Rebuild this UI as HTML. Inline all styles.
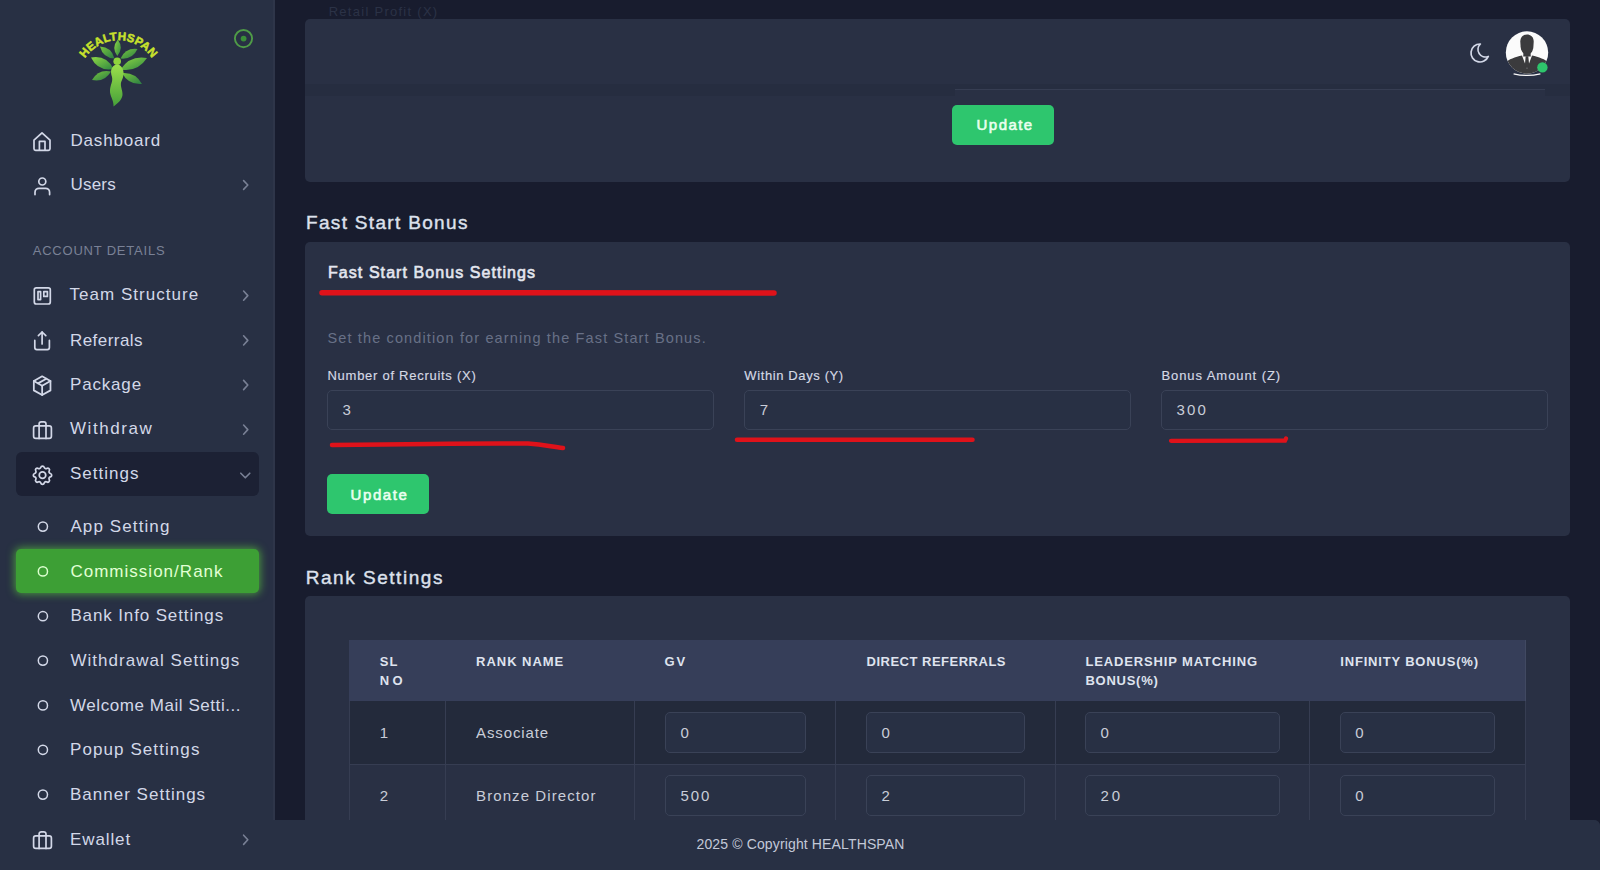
<!DOCTYPE html>
<html><head><meta charset="utf-8">
<style>
*{margin:0;padding:0;box-sizing:border-box}
html,body{width:1600px;height:870px;overflow:hidden;background:#181c2e;font-family:"Liberation Sans",sans-serif}
.a{position:absolute}
.tx{position:absolute;white-space:nowrap}
.card{position:absolute;background:#293044;border-radius:5px}
.inp{position:absolute;border:1px solid #3a4257;border-radius:5px;background:#283044}
.ic{position:absolute;fill:none;stroke:#d3d8e8;stroke-width:1.6;stroke-linecap:round;stroke-linejoin:round}
.chev{position:absolute;fill:none;stroke:#798095;stroke-width:1.3;stroke-linecap:round;stroke-linejoin:round}
.dot{position:absolute;width:11px;height:11px;border:1.5px solid #d3d8e8;border-radius:50%}
</style></head><body>
<!-- sidebar -->
<div class="a" style="left:0;top:0;width:274px;height:870px;background:#283044"></div>
<div class="a" style="left:273px;top:0;width:2px;height:820px;background:#2e3549"></div>
<!-- footer -->
<div class="a" style="left:273px;top:820px;width:1327px;height:50px;background:#283044;border-top-right-radius:6px"></div>

<!-- top card + header -->
<div class="card" style="left:305px;top:19px;width:1265px;height:163px"></div>
<div class="a" style="left:305px;top:84px;width:650px;height:12px;background:#262d40"></div>
<div class="a" style="left:955px;top:84px;width:590px;height:5px;background:#262d40"></div>
<div class="a" style="left:1545px;top:84px;width:25px;height:12px;background:#262d40"></div>
<div class="a" style="left:955px;top:89px;width:590px;height:1px;background:#363d52"></div>
<div class="a" style="left:952px;top:105px;width:102px;height:40px;background:#2ec66e;border-radius:5px"></div>

<div class="card" style="left:305px;top:242px;width:1265px;height:294px"></div>
<div class="inp" style="left:327px;top:390px;width:387px;height:40px"></div>
<div class="inp" style="left:744px;top:390px;width:387px;height:40px"></div>
<div class="inp" style="left:1161px;top:390px;width:387px;height:40px"></div>
<div class="a" style="left:327px;top:474px;width:102px;height:40px;background:#2ec66e;border-radius:5px"></div>

<div class="card" style="left:305px;top:596px;width:1265px;height:274px"></div>
<!-- table -->
<div class="a" style="left:349px;top:640px;width:1177px;height:61px;background:#363e59;border-right:1px solid #414962"></div>
<div class="a" style="left:349px;top:701px;width:1177px;height:63px;background:#232a3b"></div>
<div class="a" style="left:349px;top:764px;width:1177px;height:1px;background:#363d52"></div>
<div class="a" style="left:349px;top:701px;width:1px;height:119px;background:#363d52"></div>
<div class="a" style="left:445px;top:701px;width:1px;height:119px;background:#363d52"></div>
<div class="a" style="left:634px;top:701px;width:1px;height:119px;background:#363d52"></div>
<div class="a" style="left:835px;top:701px;width:1px;height:119px;background:#363d52"></div>
<div class="a" style="left:1055px;top:701px;width:1px;height:119px;background:#363d52"></div>
<div class="a" style="left:1309px;top:701px;width:1px;height:119px;background:#363d52"></div>
<div class="a" style="left:1525px;top:701px;width:1px;height:119px;background:#363d52"></div>
<div class="inp" style="left:665px;top:712px;width:141px;height:41px"></div>
<div class="inp" style="left:866px;top:712px;width:159px;height:41px"></div>
<div class="inp" style="left:1085px;top:712px;width:195px;height:41px"></div>
<div class="inp" style="left:1340px;top:712px;width:155px;height:41px"></div>
<div class="inp" style="left:665px;top:775px;width:141px;height:41px"></div>
<div class="inp" style="left:866px;top:775px;width:159px;height:41px"></div>
<div class="inp" style="left:1085px;top:775px;width:195px;height:41px"></div>
<div class="inp" style="left:1340px;top:775px;width:155px;height:41px"></div>
<!-- footer again on top of table -->
<div class="a" style="left:273px;top:820px;width:1327px;height:50px;background:#283044;border-top-right-radius:6px"></div>

<!-- sidebar active states -->
<div class="a" style="left:16px;top:452px;width:243px;height:44px;background:#1c2134;border-radius:6px"></div>
<div class="a" style="left:16px;top:549px;width:243px;height:44px;background:#3d9f35;border-radius:5px;box-shadow:0 0 8px 1px rgba(95,215,60,.65)"></div>


<!-- logo -->
<svg class="a" style="left:0;top:0" width="275" height="120" viewBox="0 0 275 120">
<defs>
<linearGradient id="lg1" x1="0" y1="0" x2="1" y2="1"><stop offset="0" stop-color="#8fd845"/><stop offset="1" stop-color="#2e8740"/></linearGradient>
<linearGradient id="lg2" x1="0" y1="0" x2="1" y2="1"><stop offset="0" stop-color="#79c63e"/><stop offset="1" stop-color="#2a7d44"/></linearGradient>
<linearGradient id="lg3" x1="0" y1="0" x2="0" y2="1"><stop offset="0" stop-color="#9de04b"/><stop offset="1" stop-color="#45a03a"/></linearGradient>
<path id="arc" d="M86 57 A40 40 0 0 1 151 57"/>
</defs>
<text font-family="Liberation Sans" font-weight="700" font-size="11.5" fill="#c8e12c" stroke="#c8e12c" stroke-width="0.5" letter-spacing="0.2"><textPath href="#arc" startOffset="50%" text-anchor="middle">HEALTHSPAN</textPath></text>
<path d="M117.3 56.0 Q124.0 47.9 117.8 39.5 Q111.1 47.6 117.3 56.0Z" fill="url(#lg1)"/><path d="M114.5 58.5 Q111.7 47.1 100.0 46.5 Q102.8 57.9 114.5 58.5Z" fill="url(#lg2)"/><path d="M120.5 58.5 Q132.4 59.9 137.5 49.0 Q125.6 47.6 120.5 58.5Z" fill="url(#lg2)"/><path d="M113.5 69.0 Q106.6 54.8 91.0 57.5 Q97.9 71.7 113.5 69.0Z" fill="url(#lg1)"/><path d="M120.5 69.5 Q137.5 72.5 147.0 58.0 Q130.0 55.0 120.5 69.5Z" fill="url(#lg1)"/><path d="M111.0 71.5 Q98.4 68.9 92.0 80.0 Q104.6 82.6 111.0 71.5Z" fill="url(#lg2)"/><path d="M122.0 73.0 Q128.4 85.1 142.0 84.0 Q135.6 71.9 122.0 73.0Z" fill="url(#lg2)"/>
<path d="M117 64 C124 66 125 74 122 80 C119 85 123 90 122.5 95 C122 100 117 104 113.5 106.5 C114 100 109.5 96 110 90 C110.5 84 113 82 112 77 C110 71 111 66 117 64Z" fill="url(#lg3)"/>
<circle cx="117.2" cy="61.3" r="3.8" fill="#8fd43c"/>
</svg>
<!-- icons -->
<svg class="a" style="left:0;top:0;overflow:visible" width="275" height="870">
<g fill="none" stroke="#d3d8e8" stroke-width="1.7" stroke-linecap="round" stroke-linejoin="round">
<path d="M34 140.2 L42 132.8 L50 140.2 V148.8 a1.6 1.6 0 0 1 -1.6 1.6 H35.6 a1.6 1.6 0 0 1 -1.6 -1.6 Z"/>
<path d="M39.4 150.2 V141.4 H45 V150.2"/>
<circle cx="42.3" cy="181.5" r="3.5"/>
<path d="M35 194.6 V192.3 a4 4 0 0 1 4 -4 H45.6 a4 4 0 0 1 4 4 V194.6"/>
<rect x="34.3" y="287.8" width="16" height="16.2" rx="2"/>
<rect x="38" y="291.6" width="2.6" height="8"/>
<rect x="43.8" y="291.6" width="3.6" height="4.8"/>
<path d="M34.8 340.4 V347.6 a2 2 0 0 0 2 2 H47.4 a2 2 0 0 0 2 -2 V340.4"/>
<path d="M42.1 344 V332"/><path d="M38.4 335.6 L42.1 332 L45.8 335.6"/>
<g transform="translate(29.67 373.22) scale(1.04)"><path d="M12 3l8 4.5l0 9l-8 4.5l-8 -4.5l0 -9l8 -4.5"/><path d="M12 12l8 -4.5"/><path d="M12 12l0 9"/><path d="M12 12l-8 -4.5"/><path d="M16 5.25l-8 4.5"/></g>
<rect x="33.6" y="425.8" width="17.8" height="12.6" rx="2.2"/>
<path d="M39.1 438.4 V424 a2.2 2.2 0 0 1 2.2 -2.2 H43.8 a2.2 2.2 0 0 1 2.2 2.2 V438.4"/>
<g transform="translate(30.26 462.96) scale(1.02)"><path d="M10.325 4.317c.426 -1.756 2.924 -1.756 3.35 0a1.724 1.724 0 0 0 2.573 1.066c1.543 -.94 3.31 .826 2.37 2.37a1.724 1.724 0 0 0 1.065 2.572c1.756 .426 1.756 2.924 0 3.35a1.724 1.724 0 0 0 -1.066 2.573c.94 1.543 -.826 3.31 -2.37 2.37a1.724 1.724 0 0 0 -2.572 1.065c-.426 1.756 -2.924 1.756 -3.35 0a1.724 1.724 0 0 0 -2.573 -1.066c-1.543 .94 -3.31 -.826 -2.37 -2.37a1.724 1.724 0 0 0 -1.065 -2.572c-1.756 -.426 -1.756 -2.924 0 -3.35a1.724 1.724 0 0 0 1.066 -2.573c-.94 -1.543 .826 -3.31 2.37 -2.37c1 .608 2.296 .07 2.572 -1.065z"/><circle cx="12" cy="12" r="3.2"/></g>
<rect x="33.6" y="835.8" width="17.8" height="12.6" rx="2.2"/>
<path d="M39.1 848.4 V834 a2.2 2.2 0 0 1 2.2 -2.2 H43.8 a2.2 2.2 0 0 1 2.2 2.2 V848.4"/>
</g>
<g fill="none" stroke="#d3d8e8" stroke-width="1.5">
<circle cx="42.9" cy="526.6" r="4.6"/>
<circle cx="42.9" cy="616.2" r="4.6"/>
<circle cx="42.9" cy="660.6" r="4.6"/>
<circle cx="42.9" cy="705.4" r="4.6"/>
<circle cx="42.9" cy="749.8" r="4.6"/>
<circle cx="42.9" cy="794.6" r="4.6"/>
<circle cx="42.9" cy="571.4" r="4.6" stroke="#dcffcf"/>
</g>
<g fill="none" stroke="#798095" stroke-width="1.6" stroke-linecap="round" stroke-linejoin="round">
<path d="M243.6 180.6 L247.8 185 L243.6 189.4"/>
<path d="M243.6 291 L247.8 295.6 L243.6 300.2"/>
<path d="M243.6 335.8 L247.8 340.4 L243.6 345"/>
<path d="M243.6 380.4 L247.8 385 L243.6 389.6"/>
<path d="M243.6 425 L247.8 429.6 L243.6 434.2"/>
<path d="M240.8 473.2 L245.3 477.8 L249.8 473.2"/>
<path d="M243.6 835.2 L247.8 839.8 L243.6 844.4"/>
</g>
<circle cx="243.5" cy="38.6" r="8.6" fill="none" stroke="#4f9b47" stroke-width="1.9"/>
<circle cx="243.6" cy="38.6" r="2.9" fill="#3a8f38"/>
</svg>
<!-- moon + avatar -->
<svg class="a" style="left:1468.2px;top:40.6px" width="24" height="24" viewBox="0 0 24 24"><path d="M12 3c.132 0 .263 0 .393 0a7.5 7.5 0 0 0 7.92 12.446a9 9 0 1 1 -8.313 -12.454z" fill="none" stroke="#d3d8e8" stroke-width="1.7" stroke-linejoin="round"/></svg>
<svg class="a" style="left:1500px;top:26px" width="56" height="56" viewBox="0 0 56 56">
<defs><clipPath id="av"><circle cx="27" cy="26.5" r="21.2"/></clipPath></defs>
<circle cx="27" cy="26.5" r="21.2" fill="#fbfbfb"/>
<g clip-path="url(#av)" fill="#3b3b3d">
<path d="M20.3 15.5 C20.3 6 33.7 6 33.7 15.5 L33.4 21 C33 25.5 30.5 28.5 27 29 C23.5 28.5 21 25.5 20.6 21 Z"/>
<path d="M23.6 25 L30.4 25 L30.8 30.5 L23.2 30.5 Z"/>
<path d="M2 52 L4.5 37.5 C8 33.5 15 31 22 29.5 L27 43 L32 29.5 C39 31 46 33.5 49.5 37.5 L52 52 Z"/>
<path d="M25.7 30.2 L28.3 30.2 L29.2 39.5 L27 43 L24.8 39.5 Z"/>
</g>
<path d="M13.6 47.8 Q27 51 40.4 47.8" stroke="#fbfbfb" stroke-width="1.2" fill="none"/>
<circle cx="42.4" cy="41.4" r="5.2" fill="#2ec56c"/>
</svg>

<div id="t0" class="tx" style="left:70.50px;top:131.81px;font-size:17px;line-height:17px;color:#d3d8e8;font-weight:400;letter-spacing:0.816px;">Dashboard</div>
<div id="t1" class="tx" style="left:70.50px;top:175.61px;font-size:17px;line-height:17px;color:#d3d8e8;font-weight:400;letter-spacing:0.200px;">Users</div>
<div id="t2" class="tx" style="left:32.70px;top:244.20px;font-size:13px;line-height:13px;color:#7a8196;font-weight:400;letter-spacing:0.794px;">ACCOUNT DETAILS</div>
<div id="t3" class="tx" style="left:69.50px;top:286.41px;font-size:17px;line-height:17px;color:#d3d8e8;font-weight:400;letter-spacing:1.033px;">Team Structure</div>
<div id="t4" class="tx" style="left:70.00px;top:331.51px;font-size:17px;line-height:17px;color:#d3d8e8;font-weight:400;letter-spacing:0.441px;">Referrals</div>
<div id="t5" class="tx" style="left:70.00px;top:375.91px;font-size:17px;line-height:17px;color:#d3d8e8;font-weight:400;letter-spacing:0.823px;">Package</div>
<div id="t6" class="tx" style="left:70.00px;top:420.41px;font-size:17px;line-height:17px;color:#d3d8e8;font-weight:400;letter-spacing:1.564px;">Withdraw</div>
<div id="t7" class="tx" style="left:70.00px;top:465.31px;font-size:17px;line-height:17px;color:#d3d8e8;font-weight:400;letter-spacing:0.996px;">Settings</div>
<div id="t8" class="tx" style="left:70.40px;top:517.61px;font-size:17px;line-height:17px;color:#d3d8e8;font-weight:400;letter-spacing:1.109px;">App Setting</div>
<div id="t9" class="tx" style="left:70.40px;top:562.61px;font-size:17px;line-height:17px;color:#e2ffd4;font-weight:400;letter-spacing:1.019px;">Commission/Rank</div>
<div id="t10" class="tx" style="left:70.40px;top:607.21px;font-size:17px;line-height:17px;color:#d3d8e8;font-weight:400;letter-spacing:0.872px;">Bank Info Settings</div>
<div id="t11" class="tx" style="left:70.40px;top:651.61px;font-size:17px;line-height:17px;color:#d3d8e8;font-weight:400;letter-spacing:1.031px;">Withdrawal Settings</div>
<div id="t12" class="tx" style="left:70.00px;top:696.81px;font-size:17px;line-height:17px;color:#d3d8e8;font-weight:400;letter-spacing:0.558px;">Welcome Mail Setti...</div>
<div id="t13" class="tx" style="left:70.00px;top:740.91px;font-size:17px;line-height:17px;color:#d3d8e8;font-weight:400;letter-spacing:1.084px;">Popup Settings</div>
<div id="t14" class="tx" style="left:70.00px;top:785.61px;font-size:17px;line-height:17px;color:#d3d8e8;font-weight:400;letter-spacing:1.009px;">Banner Settings</div>
<div id="t15" class="tx" style="left:70.00px;top:830.91px;font-size:17px;line-height:17px;color:#d3d8e8;font-weight:400;letter-spacing:0.898px;">Ewallet</div>
<div id="t16" class="tx" style="left:328.70px;top:5.00px;font-size:13px;line-height:13px;color:#2b3246;font-weight:400;letter-spacing:1.272px;">Retail Profit (X)</div>
<div id="t17" class="tx" style="left:976.60px;top:117.10px;font-size:15px;line-height:15px;color:#eafff0;font-weight:400;letter-spacing:1.444px;-webkit-text-stroke:0.6px #eafff0;">Update</div>
<div id="t18" class="tx" style="left:306.00px;top:213.32px;font-size:19px;line-height:19px;color:#dde1ec;font-weight:400;letter-spacing:1.325px;-webkit-text-stroke:0.4px #dde1ec;">Fast Start Bonus</div>
<div id="t19" class="tx" style="left:328.00px;top:265.21px;font-size:16px;line-height:16px;color:#e3e6ef;font-weight:400;letter-spacing:1.065px;-webkit-text-stroke:0.6px #e3e6ef;">Fast Start Bonus Settings</div>
<div id="t20" class="tx" style="left:327.50px;top:330.93px;font-size:14.5px;line-height:14.5px;color:#687087;font-weight:400;letter-spacing:1.132px;">Set the condition for earning the Fast Start Bonus.</div>
<div id="t21" class="tx" style="left:327.50px;top:369.00px;font-size:13px;line-height:13px;color:#d5d9e4;font-weight:400;letter-spacing:0.728px;-webkit-text-stroke:0.15px #d5d9e4;">Number of Recruits (X)</div>
<div id="t22" class="tx" style="left:744.30px;top:369.00px;font-size:13px;line-height:13px;color:#d5d9e4;font-weight:400;letter-spacing:0.615px;-webkit-text-stroke:0.15px #d5d9e4;">Within Days (Y)</div>
<div id="t23" class="tx" style="left:1161.40px;top:369.00px;font-size:13px;line-height:13px;color:#d5d9e4;font-weight:400;letter-spacing:0.935px;-webkit-text-stroke:0.15px #d5d9e4;">Bonus Amount (Z)</div>
<div id="t24" class="tx" style="left:342.40px;top:402.30px;font-size:15px;line-height:15px;color:#c9cdd8;font-weight:400;letter-spacing:0.000px;">3</div>
<div id="t25" class="tx" style="left:759.80px;top:402.30px;font-size:15px;line-height:15px;color:#c9cdd8;font-weight:400;letter-spacing:0.000px;">7</div>
<div id="t26" class="tx" style="left:1176.40px;top:402.30px;font-size:15px;line-height:15px;color:#c9cdd8;font-weight:400;letter-spacing:2.179px;">300</div>
<div id="t27" class="tx" style="left:350.50px;top:487.30px;font-size:15px;line-height:15px;color:#eafff0;font-weight:400;letter-spacing:1.605px;-webkit-text-stroke:0.6px #eafff0;">Update</div>
<div id="t28" class="tx" style="left:305.70px;top:567.72px;font-size:19px;line-height:19px;color:#dde1ec;font-weight:400;letter-spacing:1.534px;-webkit-text-stroke:0.4px #dde1ec;">Rank Settings</div>
<div id="t29" class="tx" style="left:379.80px;top:655.00px;font-size:13px;line-height:13px;color:#dfe3ee;font-weight:700;letter-spacing:0.980px;">SL</div>
<div id="t30" class="tx" style="left:379.80px;top:673.60px;font-size:13px;line-height:13px;color:#dfe3ee;font-weight:700;letter-spacing:3.197px;">NO</div>
<div id="t31" class="tx" style="left:476.10px;top:655.00px;font-size:13px;line-height:13px;color:#dfe3ee;font-weight:700;letter-spacing:0.957px;">RANK NAME</div>
<div id="t32" class="tx" style="left:664.40px;top:655.00px;font-size:13px;line-height:13px;color:#dfe3ee;font-weight:700;letter-spacing:1.915px;">GV</div>
<div id="t33" class="tx" style="left:866.50px;top:655.00px;font-size:13px;line-height:13px;color:#dfe3ee;font-weight:700;letter-spacing:0.503px;">DIRECT REFERRALS</div>
<div id="t34" class="tx" style="left:1085.50px;top:655.00px;font-size:13px;line-height:13px;color:#dfe3ee;font-weight:700;letter-spacing:0.858px;">LEADERSHIP MATCHING</div>
<div id="t35" class="tx" style="left:1085.50px;top:673.70px;font-size:13px;line-height:13px;color:#dfe3ee;font-weight:700;letter-spacing:0.733px;">BONUS(%)</div>
<div id="t36" class="tx" style="left:1340.30px;top:655.00px;font-size:13px;line-height:13px;color:#dfe3ee;font-weight:700;letter-spacing:0.812px;">INFINITY BONUS(%)</div>
<div id="t37" class="tx" style="left:379.80px;top:725.30px;font-size:15px;line-height:15px;color:#c9cdd8;font-weight:400;letter-spacing:0.000px;">1</div>
<div id="t38" class="tx" style="left:476.10px;top:725.30px;font-size:15px;line-height:15px;color:#c9cdd8;font-weight:400;letter-spacing:0.870px;">Associate</div>
<div id="t39" class="tx" style="left:680.40px;top:725.30px;font-size:15px;line-height:15px;color:#c9cdd8;font-weight:400;letter-spacing:0.000px;">0</div>
<div id="t40" class="tx" style="left:881.50px;top:725.30px;font-size:15px;line-height:15px;color:#c9cdd8;font-weight:400;letter-spacing:0.000px;">0</div>
<div id="t41" class="tx" style="left:1100.50px;top:725.30px;font-size:15px;line-height:15px;color:#c9cdd8;font-weight:400;letter-spacing:0.000px;">0</div>
<div id="t42" class="tx" style="left:1355.30px;top:725.30px;font-size:15px;line-height:15px;color:#c9cdd8;font-weight:400;letter-spacing:0.000px;">0</div>
<div id="t43" class="tx" style="left:379.80px;top:787.80px;font-size:15px;line-height:15px;color:#c9cdd8;font-weight:400;letter-spacing:0.000px;">2</div>
<div id="t44" class="tx" style="left:476.10px;top:787.80px;font-size:15px;line-height:15px;color:#c9cdd8;font-weight:400;letter-spacing:1.078px;">Bronze Director</div>
<div id="t45" class="tx" style="left:680.40px;top:787.80px;font-size:15px;line-height:15px;color:#c9cdd8;font-weight:400;letter-spacing:1.984px;">500</div>
<div id="t46" class="tx" style="left:881.50px;top:787.80px;font-size:15px;line-height:15px;color:#c9cdd8;font-weight:400;letter-spacing:0.000px;">2</div>
<div id="t47" class="tx" style="left:1100.50px;top:787.80px;font-size:15px;line-height:15px;color:#c9cdd8;font-weight:400;letter-spacing:2.809px;">20</div>
<div id="t48" class="tx" style="left:1355.30px;top:787.80px;font-size:15px;line-height:15px;color:#c9cdd8;font-weight:400;letter-spacing:0.000px;">0</div>
<div id="t49" class="tx" style="left:696.50px;top:837.35px;font-size:14px;line-height:14px;color:#c3c9d8;font-weight:400;letter-spacing:0.137px;">2025 © Copyright HEALTHSPAN</div>

<!-- red annotations -->
<svg class="a" style="left:0;top:0" width="1600" height="870" viewBox="0 0 1600 870">
<g fill="none" stroke="#df121a" stroke-linecap="round">
<path d="M322 292.7 L774 292.9" stroke-width="5.5"/>
<path d="M332 445 C 400 444, 470 443, 528 443.5 C 545 444.5, 552 447, 563 448" stroke-width="4.5"/>
<path d="M737 439.8 L972.5 439.8" stroke-width="4.5"/>
<path d="M1171 440.8 L1285 440.6 L1286 438.5" stroke-width="4.2"/>
</g>
</svg>
</body></html>
